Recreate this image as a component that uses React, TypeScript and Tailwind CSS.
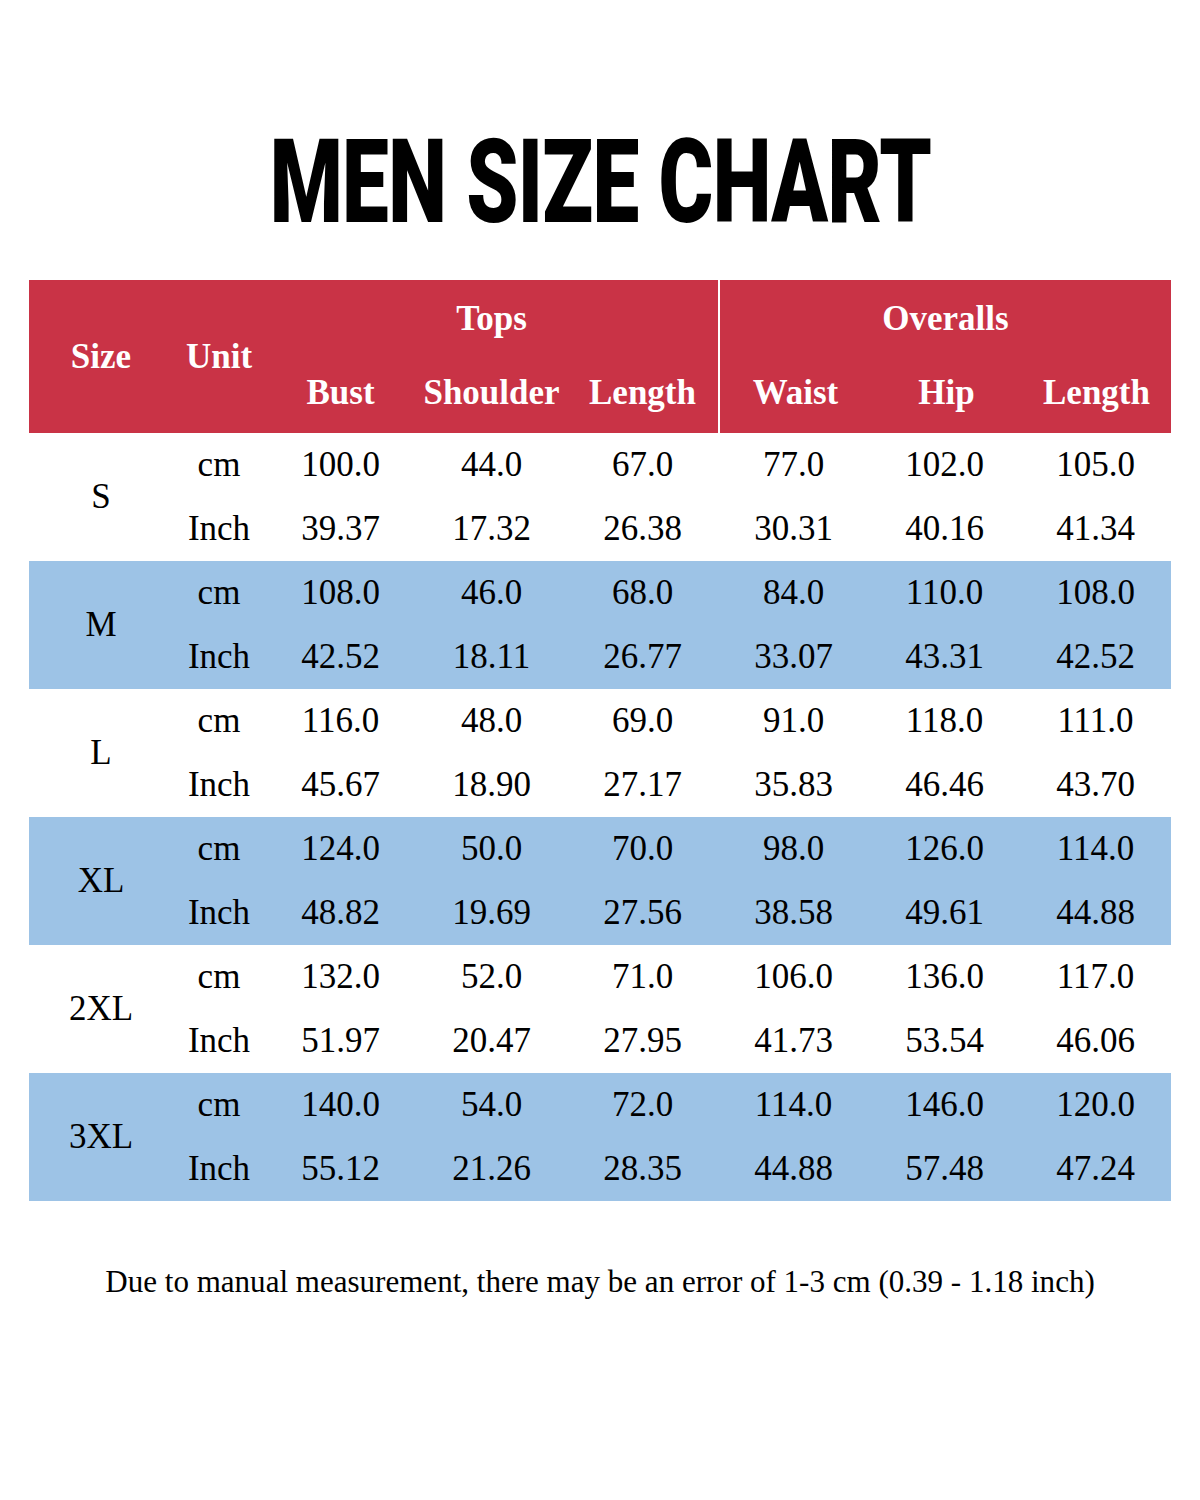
import React from "react";

type Row = { size: string; cm: string[]; inch: string[]; blue: boolean };

const rows: Row[] = [
  { size: "S", cm: ["100.0", "44.0", "67.0", "77.0", "102.0", "105.0"], inch: ["39.37", "17.32", "26.38", "30.31", "40.16", "41.34"], blue: false },
  { size: "M", cm: ["108.0", "46.0", "68.0", "84.0", "110.0", "108.0"], inch: ["42.52", "18.11", "26.77", "33.07", "43.31", "42.52"], blue: true },
  { size: "L", cm: ["116.0", "48.0", "69.0", "91.0", "118.0", "111.0"], inch: ["45.67", "18.90", "27.17", "35.83", "46.46", "43.70"], blue: false },
  { size: "XL", cm: ["124.0", "50.0", "70.0", "98.0", "126.0", "114.0"], inch: ["48.82", "19.69", "27.56", "38.58", "49.61", "44.88"], blue: true },
  { size: "2XL", cm: ["132.0", "52.0", "71.0", "106.0", "136.0", "117.0"], inch: ["51.97", "20.47", "27.95", "41.73", "53.54", "46.06"], blue: false },
  { size: "3XL", cm: ["140.0", "54.0", "72.0", "114.0", "146.0", "120.0"], inch: ["55.12", "21.26", "28.35", "44.88", "57.48", "47.24"], blue: true },
];

const serif = { fontFamily: '"Liberation Serif", "Times New Roman", serif' };

export default function App() {
  return (
    <div className="w-[1200px] h-[1500px] bg-white flex flex-col items-center" style={serif}>
      <div className="h-[280px] w-full flex items-center justify-center pt-[84px]">
        <div
          className="text-black font-black text-[116px] leading-none scale-x-[0.72] tracking-[-1px] whitespace-nowrap"
          style={{ fontFamily: '"Roboto", "Liberation Sans", sans-serif' }}
        >
          MEN SIZE CHART
        </div>
      </div>
      <div className="w-[1142px] flex flex-col">
        <div className="h-[153px] bg-[#c93346] flex text-white font-bold text-[35px]">
          <div className="w-[144px] flex items-center justify-center pt-[2px]">Size</div>
          <div className="w-[92px] flex items-center justify-center pt-[2px]">Unit</div>
          <div className="w-[453px] flex flex-col">
            <div className="h-[76px] flex items-center justify-center pt-[2px]">Tops</div>
            <div className="flex-1 flex">
              <div className="w-[151px] flex items-center justify-center pb-[2px]">Bust</div>
              <div className="w-[151px] flex items-center justify-center pb-[2px]">Shoulder</div>
              <div className="w-[151px] flex items-center justify-center pb-[2px]">Length</div>
            </div>
          </div>
          <div className="w-[2px] bg-white"></div>
          <div className="flex-1 flex flex-col">
            <div className="h-[76px] flex items-center justify-center pt-[2px]">Overalls</div>
            <div className="flex-1 flex">
              <div className="w-[151px] flex items-center justify-center pb-[2px]">Waist</div>
              <div className="w-[151px] flex items-center justify-center pb-[2px]">Hip</div>
              <div className="flex-1 flex items-center justify-center pb-[2px]">Length</div>
            </div>
          </div>
        </div>
        {rows.map((r) => (
          <div key={r.size} className={`h-[128px] flex text-black text-[35px] ${r.blue ? "bg-[#9dc3e6]" : "bg-white"}`}>
            <div className="w-[144px] flex items-center justify-center">{r.size}</div>
            <div className="flex-1 flex flex-col">
              {[
                ["cm", r.cm],
                ["Inch", r.inch],
              ].map(([u, vals]) => (
                <div key={u as string} className="h-[64px] flex items-center">
                  <div className="w-[92px] flex justify-center">{u as string}</div>
                  {(vals as string[]).map((v, i) => (
                    <div key={i} className="w-[151px] flex justify-center">
                      {v}
                    </div>
                  ))}
                </div>
              ))}
            </div>
          </div>
        ))}
      </div>
      <div className="mt-[64px] text-black text-[32px] leading-none whitespace-nowrap scale-x-[0.97]">
        Due to manual measurement, there may be an error of 1-3 cm (0.39 - 1.18 inch)
      </div>
    </div>
  );
}
